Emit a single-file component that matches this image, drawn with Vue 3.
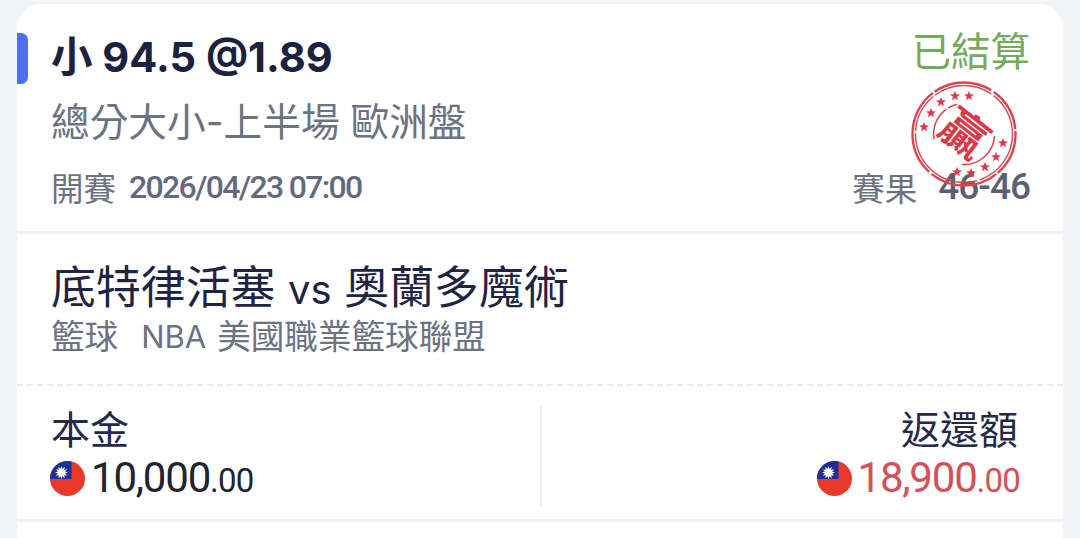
<script setup>
const flagRays = Array.from({ length: 12 }, (_, i) => i * 30)
const stampStars = [
  [-40, -7], [-33, -21], [-23, -32], [-9, -38], [5, -38],
  [39, 9], [32, 23], [21, 33], [7, 39], [-7, 38],
]
const starPath = (() => {
  const pts = []
  for (let i = 0; i < 10; i++) {
    const r = i % 2 ? 2.2 : 5.2
    const a = (Math.PI / 5) * i - Math.PI / 2
    pts.push(`${(r * Math.cos(a)).toFixed(2)},${(r * Math.sin(a)).toFixed(2)}`)
  }
  return pts.join(' ')
})()
</script>

<template>
  <div class="page">
    <div class="card">
      <span class="accent"></span>

      <section class="head">
        <div class="row top">
          <h1 class="pick">小 94.5 @1.89</h1>
          <span class="status">已結算</span>
        </div>
        <div class="market">總分大小-上半場 歐洲盤</div>
        <div class="row meta">
          <span class="meta-item"><span class="cjk">開賽</span><b>2026/04/23 07:00</b></span>
          <span class="meta-item"><span class="cjk">賽果</span><b class="score">46-46</b></span>
        </div>
      </section>

      <section class="match">
        <div class="teams">底特律活塞 <span class="vs">vs</span> 奧蘭多魔術</div>
        <div class="league"><span>籃球</span><span class="nba">NBA</span><span>美國職業籃球聯盟</span></div>
      </section>

      <section class="money">
        <div class="cell">
          <div class="label">本金</div>
          <div class="amount">
            <svg class="flag" viewBox="0 0 35 35" aria-hidden="true">
              <circle cx="17.5" cy="17.5" r="17.5" fill="#e8392b" />
              <path d="M21.5 .45A17.5 17.5 0 0 0 0 18H21.5Z" fill="#1d2f9b" />
              <g fill="#fff" transform="translate(11.5 11.5)">
                <polygon v-for="r in flagRays" :key="r" points="-1.2,-3 0,-6.5 1.2,-3" :transform="`rotate(${r})`" />
                <circle r="3.6" />
              </g>
            </svg>
            <span class="big">10,000</span><span class="small">.00</span>
          </div>
        </div>
        <div class="cell right">
          <div class="label">返還額</div>
          <div class="amount win">
            <svg class="flag" viewBox="0 0 35 35" aria-hidden="true">
              <circle cx="17.5" cy="17.5" r="17.5" fill="#e8392b" />
              <path d="M21.5 .45A17.5 17.5 0 0 0 0 18H21.5Z" fill="#1d2f9b" />
              <g fill="#fff" transform="translate(11.5 11.5)">
                <polygon v-for="r in flagRays" :key="r" points="-1.2,-3 0,-6.5 1.2,-3" :transform="`rotate(${r})`" />
                <circle r="3.6" />
              </g>
            </svg>
            <span class="big">18,900</span><span class="small">.00</span>
          </div>
        </div>
      </section>
      <div class="tail"></div>

      <svg class="stamp" viewBox="-56 -56 112 112" width="112" height="112" aria-hidden="true">
        <g fill="none" stroke="#d9464f">
          <circle r="51.5" stroke-width="2.4" stroke-dasharray="44 2 70 3 90 2 60 3" />
          <circle r="48.5" stroke-width="1.4" stroke-dasharray="60 3 90 2 40 2" />
          <path d="M-30 5 A30.5 30.5 0 0 1 0 -30.5" stroke-width="1.6" stroke-dasharray="34 2 10" />
          <path d="M30.5 2 A30.5 30.5 0 0 1 -2 30.5" stroke-width="1.6" />
        </g>
        <g fill="#d83a48">
          <polygon v-for="(s, i) in stampStars" :key="i" :points="starPath" :transform="`translate(${s[0]} ${s[1]})`" />
        </g>
        <text class="stamp-word" x="0" y="16" text-anchor="middle" transform="rotate(38)">贏</text>
      </svg>
    </div>
  </div>
</template>

<style>
html, body { margin: 0; background: #f2f4f8; overflow: hidden; }
</style>

<style scoped>
.page {
  width: 1080px;
  height: 538px;
  padding: 4px 17px 0;
  box-sizing: border-box;
  overflow: hidden;
  font-family: "Inter", "Noto Sans CJK TC", sans-serif;
}
.card {
  position: relative;
  background: #fff;
  border-radius: 24px 24px 0 0;
}
.accent {
  position: absolute;
  left: 0;
  top: 29px;
  width: 11px;
  height: 51px;
  background: #4f6ef0;
  border-radius: 0 7px 7px 0;
}
.stamp {
  position: absolute;
  left: 891px;
  top: 74px;
}
.stamp-word {
  font-family: "Noto Sans CJK TC", sans-serif;
  font-size: 46px;
  font-weight: 700;
  fill: #d83a48;
}
.head {
  height: 230px;
  padding: 24px 33px 0 34px;
  box-sizing: border-box;
  border-bottom: 3px solid #eef0f7;
}
.row {
  display: flex;
  justify-content: space-between;
  align-items: center;
}
.row.top { align-items: flex-start; }
.pick {
  margin: 0;
  font-size: 41.5px;
  line-height: 58px;
  font-weight: 700;
  color: #1b2140;
  font-family: "Inter", "Noto Sans CJK TC", sans-serif;
}
.status {
  margin-top: -3px;
  font-size: 39.5px;
  line-height: 48px;
  color: #73ab5b;
  font-family: "Noto Sans CJK TC", sans-serif;
}
.market {
  margin-top: 10px;
  font-size: 38.7px;
  line-height: 52px;
  color: #6d7282;
}
.meta {
  margin-top: 17px;
  color: #6d7282;
}
.meta-item {
  display: flex;
  align-items: center;
  gap: 13px;
  font-size: 32.5px;
  line-height: 44px;
}
.meta-item b {
  font-family: "Roboto", sans-serif;
  font-weight: 500;
  font-size: 32px;
  letter-spacing: -1.7px;
  color: #646a7c;
}
.meta-item .score {
  font-size: 37px;
  letter-spacing: -1px;
  color: #596072;
  margin-left: 8px;
}
.match {
  height: 152px;
  padding: 27px 35px 0 34px;
  box-sizing: border-box;
  border-bottom: 2px dashed #e9ebf1;
}
.teams {
  font-size: 44.9px;
  line-height: 54px;
  color: #1f2443;
}
.vs { font-size: 40px; }
.league {
  display: flex;
  font-size: 33.6px;
  line-height: 40px;
  color: #6d7282;
}
.nba {
  font-size: 31px;
  margin: 0 11px 0 23px;
}
.money {
  display: grid;
  grid-template-columns: 1fr 1fr;
  padding: 20px 0 13px;
  border-bottom: 3px solid #eef0f7;
}
.cell {
  height: 100px;
  padding-left: 33px;
  box-sizing: border-box;
}
.cell.right {
  text-align: right;
  padding: 0 43px 0 0;
  border-left: 2px solid #eef0f7;
}
.label {
  font-size: 39px;
  line-height: 48px;
  padding-left: 1px;
  color: #24294a;
}
.right .label { padding-right: 2px; }
.amount {
  display: flex;
  align-items: center;
  height: 48px;
  color: #22242d;
  font-family: "Roboto", sans-serif;
  font-weight: 400;
}
.right .amount { justify-content: flex-end; }
.amount.win { color: #d4515a; }
.flag {
  width: 35px;
  height: 35px;
  margin-right: 6px;
}
.big { font-size: 42px; line-height: 48px; letter-spacing: -1.2px; }
.small { font-size: 33px; line-height: 48px; margin-top: 5px; letter-spacing: -0.8px; }
.tail { height: 30px; }
.cjk { font-family: "Noto Sans CJK TC", sans-serif; }
</style>
